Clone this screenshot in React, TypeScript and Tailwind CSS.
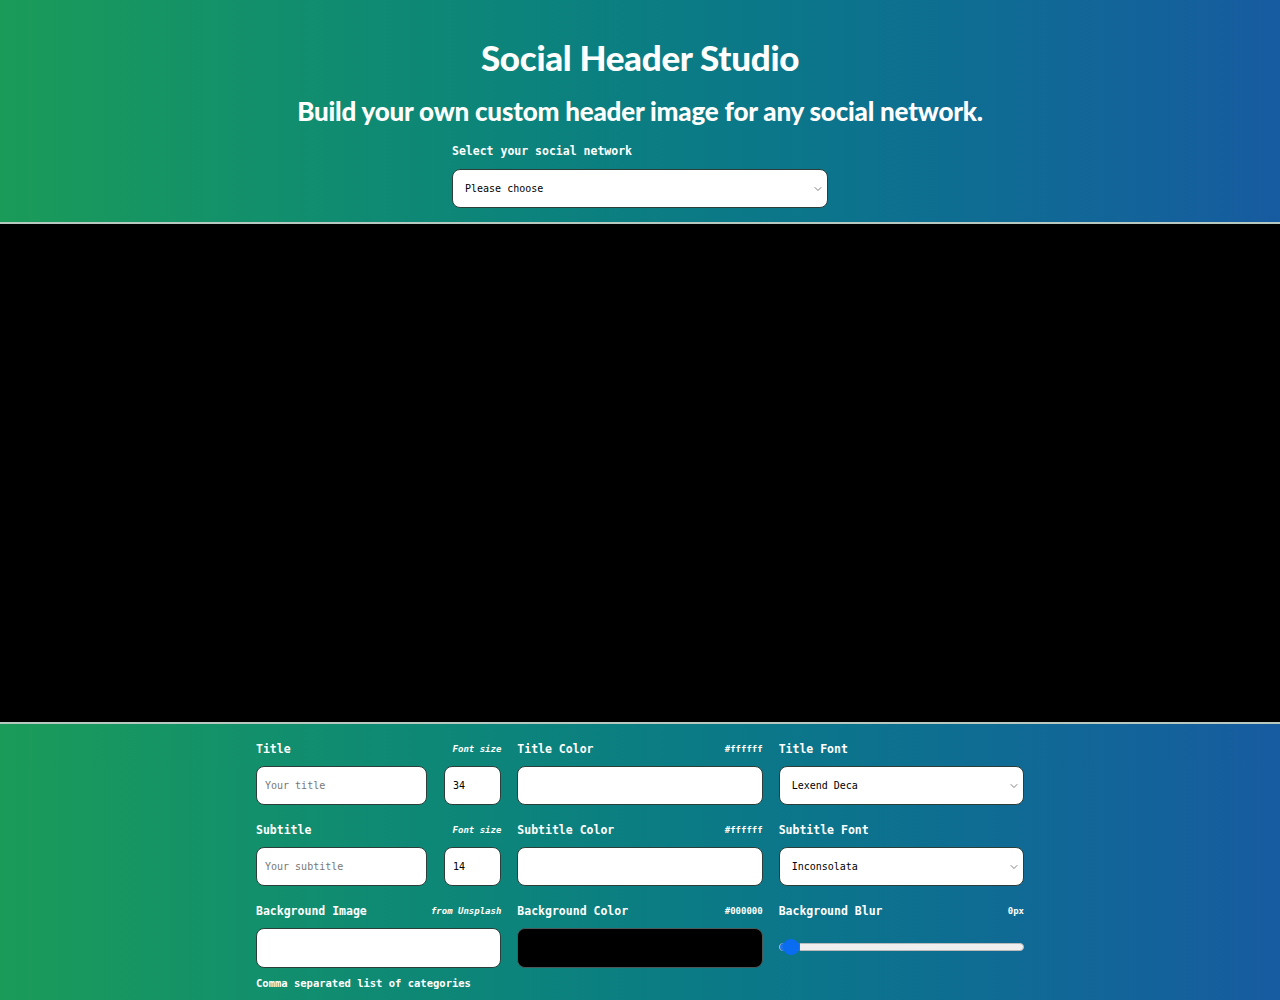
import { ChevronDown } from 'lucide-react';

const mono = "font-['DejaVu_Sans_Mono','Liberation_Mono',monospace]";
const display = "font-['Lato','Noto_Sans',sans-serif]";

const inputCls =
  'h-[39px] rounded-[8px] border border-[#2c3e3a] bg-white px-2 text-[10px] text-black outline-none placeholder:text-[#777]';

function Field({
  label,
  hint,
  hintItalic,
  children,
  note,
}: {
  label: string;
  hint?: string;
  hintItalic?: boolean;
  children: React.ReactNode;
  note?: string;
}) {
  return (
    <div className="flex flex-col">
      <div className="flex h-[18px] items-center justify-between">
        <span className="text-[11.5px] font-bold">{label}</span>
        {hint && (
          <span className={`text-[9px] font-bold ${hintItalic ? 'italic' : ''}`}>{hint}</span>
        )}
      </div>
      <div className="mt-[7px]">{children}</div>
      {note && <div className="mt-[8px] text-[10.5px] font-bold">{note}</div>}
    </div>
  );
}

function Select({ value }: { value: string }) {
  return (
    <div className="relative flex h-[39px] w-full items-center rounded-[8px] border border-[#2c3e3a] bg-white pl-3 text-[10px] text-black">
      {value}
      <ChevronDown className="absolute right-[3px] top-[13px] h-3 w-3 text-[#555]" strokeWidth={1.5} />
    </div>
  );
}

function SizeRow({ label, placeholder, size }: { label: string; placeholder: string; size: string }) {
  return (
    <div className="flex flex-col">
      <div className="flex h-[18px] items-center justify-between">
        <span className="text-[11.5px] font-bold">{label}</span>
        <span className="text-[9px] font-bold italic">Font size</span>
      </div>
      <div className="mt-[7px] flex gap-[17px]">
        <input className={`${inputCls} w-[171px]`} placeholder={placeholder} />
        <input className={`${inputCls} w-[57px]`} defaultValue={size} />
      </div>
    </div>
  );
}

export default function App() {
  return (
    <div className={`${mono} min-h-[1000px] text-white`}>
      {/* Header */}
      <header className="flex h-[224px] flex-col items-center border-b-2 border-[#b7c8c0] bg-gradient-to-r from-[#1b9b58] to-[#175ba0] pt-[36px]">
        <h1 className={`${display} text-[35px] font-black leading-[42px] tracking-[-0.3px]`}>
          Social Header Studio
        </h1>
        <h2 className={`${display} mt-[17px] text-[26px] font-black leading-[32px] tracking-[-0.2px]`}>
          Build your own custom header image for any social network.
        </h2>
        <div className="mt-[15px] w-[376px]">
          <label className="block text-[11.5px] font-bold leading-[18px]">Select your social network</label>
          <div className="mt-[9px]">
            <Select value="Please choose" />
          </div>
        </div>
      </header>

      {/* Preview canvas */}
      <div className="h-[498px] bg-black" />

      {/* Controls */}
      <section className="h-[278px] border-t-2 border-[#b7c8c0] bg-gradient-to-r from-[#1b9b58] to-[#175ba0] pt-[17px]">
        <div className="mx-auto grid w-[768px] grid-cols-3 gap-x-[16px] gap-y-[17px]">
          <SizeRow label="Title" placeholder="Your title" size="34" />
          <Field label="Title Color" hint="#ffffff">
            <input className={`${inputCls} w-full`} />
          </Field>
          <Field label="Title Font">
            <Select value="Lexend Deca" />
          </Field>

          <SizeRow label="Subtitle" placeholder="Your subtitle" size="14" />
          <Field label="Subtitle Color" hint="#ffffff">
            <input className={`${inputCls} w-full`} />
          </Field>
          <Field label="Subtitle Font">
            <Select value="Inconsolata" />
          </Field>

          <Field label="Background Image" hint="from Unsplash" hintItalic note="Comma separated list of categories">
            <input className={`${inputCls} h-[40px] w-full`} />
          </Field>
          <Field label="Background Color" hint="#000000">
            <div className="h-[40px] w-full rounded-[8px] border border-[#4a5a5a] bg-black" />
          </Field>
          <Field label="Background Blur" hint="0px">
            <div className="relative mt-[15px] h-[8px] w-full rounded-full border border-[#bbb] bg-[#efefef]">
              <div className="absolute left-0 top-[-1px] h-[8px] w-[20px] rounded-l-full bg-[#1a73e8]" />
              <div className="absolute left-[3px] top-[-5px] h-[16px] w-[16px] rounded-full bg-[#0a6cf0]" />
            </div>
          </Field>
        </div>
      </section>
    </div>
  );
}
